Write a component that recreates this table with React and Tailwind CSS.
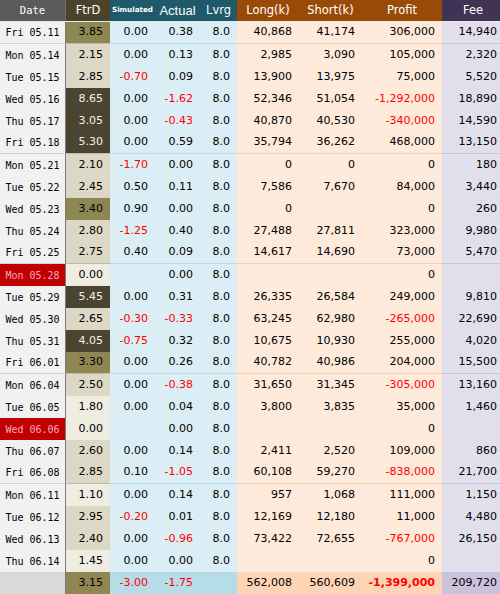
import React from "react";

const rows = [
  ["Fri 05.11", "3.85", "m", "0.00", "0.38", "8.0", "40,868", "41,174", "306,000", "14,940", true],
  ["Mon 05.14", "2.15", "l", "0.00", "0.13", "8.0", "2,985", "3,090", "105,000", "2,320"],
  ["Tue 05.15", "2.85", "l", "-0.70", "0.09", "8.0", "13,900", "13,975", "75,000", "5,520"],
  ["Wed 05.16", "8.65", "d", "0.00", "-1.62", "8.0", "52,346", "51,054", "-1,292,000", "18,890"],
  ["Thu 05.17", "3.05", "d", "0.00", "-0.43", "8.0", "40,870", "40,530", "-340,000", "14,590"],
  ["Fri 05.18", "5.30", "d", "0.00", "0.59", "8.0", "35,794", "36,262", "468,000", "13,150", true],
  ["Mon 05.21", "2.10", "l", "-1.70", "0.00", "8.0", "0", "0", "0", "180"],
  ["Tue 05.22", "2.45", "l", "0.50", "0.11", "8.0", "7,586", "7,670", "84,000", "3,440"],
  ["Wed 05.23", "3.40", "m", "0.90", "0.00", "8.0", "0", "", "0", "260"],
  ["Thu 05.24", "2.80", "l", "-1.25", "0.40", "8.0", "27,488", "27,811", "323,000", "9,980"],
  ["Fri 05.25", "2.75", "l", "0.40", "0.09", "8.0", "14,617", "14,690", "73,000", "5,470", true],
  ["Mon 05.28", "0.00", "v", "", "0.00", "8.0", "", "", "0", "", false, true],
  ["Tue 05.29", "5.45", "d", "0.00", "0.31", "8.0", "26,335", "26,584", "249,000", "9,810"],
  ["Wed 05.30", "2.65", "l", "-0.30", "-0.33", "8.0", "63,245", "62,980", "-265,000", "22,690"],
  ["Thu 05.31", "4.05", "d", "-0.75", "0.32", "8.0", "10,675", "10,930", "255,000", "4,020"],
  ["Fri 06.01", "3.30", "m", "0.00", "0.26", "8.0", "40,782", "40,986", "204,000", "15,500", true],
  ["Mon 06.04", "2.50", "l", "0.00", "-0.38", "8.0", "31,650", "31,345", "-305,000", "13,160"],
  ["Tue 06.05", "1.80", "v", "0.00", "0.04", "8.0", "3,800", "3,835", "35,000", "1,460"],
  ["Wed 06.06", "0.00", "v", "", "0.00", "8.0", "", "", "0", "", false, true],
  ["Thu 06.07", "2.60", "l", "0.00", "0.14", "8.0", "2,411", "2,520", "109,000", "860"],
  ["Fri 06.08", "2.85", "l", "0.10", "-1.05", "8.0", "60,108", "59,270", "-838,000", "21,700", true],
  ["Mon 06.11", "1.10", "v", "0.00", "0.14", "8.0", "957", "1,068", "111,000", "1,150"],
  ["Tue 06.12", "2.95", "l", "-0.20", "0.01", "8.0", "12,169", "12,180", "11,000", "4,480"],
  ["Wed 06.13", "2.40", "l", "0.00", "-0.96", "8.0", "73,422", "72,655", "-767,000", "26,150"],
  ["Thu 06.14", "1.45", "v", "0.00", "0.00", "8.0", "", "", "0", ""],
];

const heat = {
  d: "bg-[#4a4430] text-[#f2f0e6]",
  m: "bg-[#8f8752] text-black",
  l: "bg-[#ddd8c5] text-black",
  v: "bg-[#efece2] text-black",
};

const neg = (v) => (v.startsWith("-") ? "text-[#ff0000]" : "text-black");

function Row({ r }) {
  const [date, ftr, h, sim, act, lv, lo, sh, pr, fee, sep, red] = r;
  const b = sep ? "border-b" : "";
  const num = "flex items-center justify-end pr-[7px] h-full";
  return (
    <div className="flex h-[22px] font-['DejaVu_Sans',sans-serif] text-[11px]">
      <div
        className={`w-[66px] shrink-0 flex items-center justify-center border-r border-r-[#7a7a7a] font-['DejaVu_Sans_Mono',monospace] text-[10px] ${
          red ? "bg-[#c00000] text-[#f5a8bc]" : "bg-[#f1f1f1] text-black"
        } ${sep ? "border-b border-b-[#cfcfcf]" : ""}`}
      >
        {date}
      </div>
      <div className={`w-[44px] shrink-0 ${num} ${heat[h]} ${sep ? "border-b border-b-[#bfbba8]" : ""}`}>{ftr}</div>
      <div className={`flex w-[127px] shrink-0 bg-[#dbeef5] ${b} border-b-[#bddcea]`}>
        <div className={`w-[45px] ${num} ${neg(sim)}`}>{sim}</div>
        <div className={`w-[45px] ${num} ${neg(act)}`}>{act}</div>
        <div className={`w-[37px] ${num}`}>{lv}</div>
      </div>
      <div className={`flex w-[205px] shrink-0 bg-[#fdeadb] ${b} border-b-[#f5d1b4]`}>
        <div className={`w-[62px] ${num}`}>{lo}</div>
        <div className={`w-[63px] ${num}`}>{sh}</div>
        <div className={`w-[80px] ${num} ${neg(pr)}`}>{pr}</div>
      </div>
      <div className={`w-[62px] shrink-0 ${num} bg-[#e2dfec] ${b} border-b-[#c8c2da]`}>{fee}</div>
    </div>
  );
}

export default function App() {
  const hd = "flex items-center justify-center h-full shrink-0 text-white";
  return (
    <div className="w-[500px] h-[594px] overflow-hidden bg-white">
      <div className="w-[504px]">
        <div className="flex h-[22px] font-['DejaVu_Sans',sans-serif] text-[11.5px] border-b border-b-[#e8e8e8]">
          <div className={`${hd} w-[66px] bg-[#5a5a5a] font-['DejaVu_Sans_Mono',monospace] text-[10.5px] border-r border-r-[#6e6e6e]`}>Date</div>
          <div className={`${hd} w-[44px] bg-[#4b4329]`}>FtrD</div>
          <div className={`${hd} w-[45px] bg-[#1e5a6a] font-bold text-[7.2px]`}>Simulated</div>
          <div className={`${hd} w-[45px] bg-[#1e5a6a] font-['Liberation_Sans',sans-serif] text-[13px]`}>Actual</div>
          <div className={`${hd} w-[37px] bg-[#1e5a6a]`}>Lvrg</div>
          <div className={`${hd} w-[62px] bg-[#9a4a07]`}>Long(k)</div>
          <div className={`${hd} w-[63px] bg-[#9a4a07]`}>Short(k)</div>
          <div className={`${hd} w-[80px] bg-[#9a4a07]`}>Profit</div>
          <div className={`${hd} w-[62px] bg-[#403353]`}>Fee</div>
        </div>
        {rows.map((r, i) => (
          <Row key={i} r={r} />
        ))}
        <div className="flex h-[22px] font-['DejaVu_Sans',sans-serif] text-[11px] text-black">
          <div className="w-[66px] shrink-0 bg-[#d9d9d9] border-r border-r-[#7a7a7a]" />
          <div className="w-[44px] shrink-0 flex items-center justify-end pr-[7px] bg-[#8f8752]">3.15</div>
          <div className="flex w-[127px] shrink-0 bg-[#b5dce7]">
            <div className="w-[45px] flex items-center justify-end pr-[7px] text-[#ff0000]">-3.00</div>
            <div className="w-[45px] flex items-center justify-end pr-[7px] text-[#ff0000]">-1.75</div>
            <div className="w-[37px]" />
          </div>
          <div className="flex w-[205px] shrink-0 bg-[#fdd5b6]">
            <div className="w-[62px] flex items-center justify-end pr-[7px]">562,008</div>
            <div className="w-[63px] flex items-center justify-end pr-[7px]">560,609</div>
            <div className="w-[80px] flex items-center justify-end pr-[7px] text-[#ff0000] font-bold">-1,399,000</div>
          </div>
          <div className="w-[62px] shrink-0 flex items-center justify-end pr-[7px] bg-[#cbc1da]">209,720</div>
        </div>
      </div>
    </div>
  );
}
